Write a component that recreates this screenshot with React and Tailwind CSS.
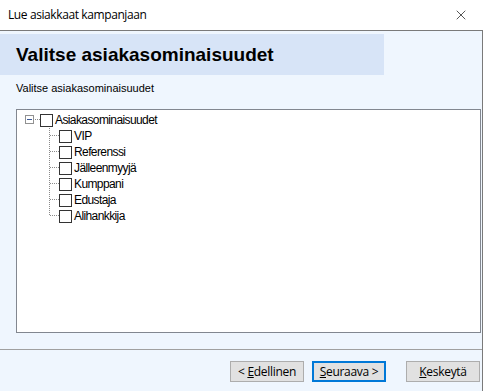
import { X } from "lucide-react";

const items = ["VIP", "Referenssi", "Jälleenmyyjä", "Kumppani", "Edustaja", "Alihankkija"];

function Checkbox() {
  return <span className="w-[13px] h-[13px] shrink-0 bg-white border border-[#333333]" />;
}

function Btn({ children, primary, className = "" }) {
  return (
    <button
      className={
        "w-[74px] h-[21px] bg-[#e1e1e1] text-[12px] tracking-[-0.3px] text-black leading-none flex items-center justify-center " +
        (primary ? "border-2 border-[#0078d7] " : "border border-[#adadad] ") +
        className
      }
    >
      {children}
    </button>
  );
}

export default function App() {
  return (
    <div className="w-[483px] h-[391px] flex flex-col bg-[#eff6fe] font-['Noto_Sans',sans-serif] text-black overflow-hidden">
      <div className="h-[31px] shrink-0 bg-white border-b border-[#7a7a7a] flex items-center justify-between pl-[8px] pr-[14px]">
        <span className="text-[12px] tracking-[-0.4px] font-['Open_Sans',sans-serif]">Lue asiakkaat kampanjaan</span>
        <X size={16} strokeWidth={1} className="text-black" />
      </div>

      <div className="flex-1 flex flex-col border-r border-[#7a7a7a]">
        <div className="mt-[3px] h-[41px] w-[384px] bg-[#d7e4f7] flex items-center pl-[16px]">
          <h1 className="text-[19px] font-bold font-['Liberation_Sans',sans-serif] pt-[2px]">
            Valitse asiakasominaisuudet
          </h1>
        </div>

        <p className="mt-[7px] pl-[16px] text-[11px] font-['Liberation_Sans',sans-serif] leading-[13px]">
          Valitse asiakasominaisuudet
        </p>

        <div className="mt-[14px] ml-[16px] w-[465px] h-[224px] bg-white border border-[#828790] pt-[2px] font-['Liberation_Sans',sans-serif] text-[12px] tracking-[-0.6px]">
          <div className="flex items-center h-[16px]">
            <svg width="23" height="16" className="shrink-0">
              <rect x="8.5" y="3.5" width="8" height="8" fill="white" stroke="#919191" />
              <line x1="10" y1="7.5" x2="15" y2="7.5" stroke="#3b5998" />
              <line x1="18" y1="7.5" x2="23" y2="7.5" stroke="#8a8a8a" strokeDasharray="1 1" />
            </svg>
            <Checkbox />
            <span className="ml-[2px]">Asiakasominaisuudet</span>
          </div>
          {items.map((item, i) => (
            <div key={item} className="flex items-center h-[16px]">
              <svg width="42" height="16" className="shrink-0">
                <line
                  x1="32.5"
                  y1="0"
                  x2="32.5"
                  y2={i === items.length - 1 ? 8 : 16}
                  stroke="#8a8a8a"
                  strokeDasharray="1 1"
                />
                <line x1="33" y1="7.5" x2="42" y2="7.5" stroke="#8a8a8a" strokeDasharray="1 1" />
              </svg>
              <Checkbox />
              <span className="ml-[2px]">{item}</span>
            </div>
          ))}
        </div>

        <div className="mt-[16px] border-t border-[#a0a0a0] flex-1 flex items-start justify-end pt-[11px] pr-[2px] gap-[8px] font-['Open_Sans',sans-serif]">
          <Btn>
            &lt;&nbsp;<u>E</u>dellinen
          </Btn>
          <Btn primary>
            <u>S</u>euraava &gt;
          </Btn>
          <Btn className="ml-[12px]">
            <u>K</u>eskeytä
          </Btn>
        </div>
      </div>
    </div>
  );
}
